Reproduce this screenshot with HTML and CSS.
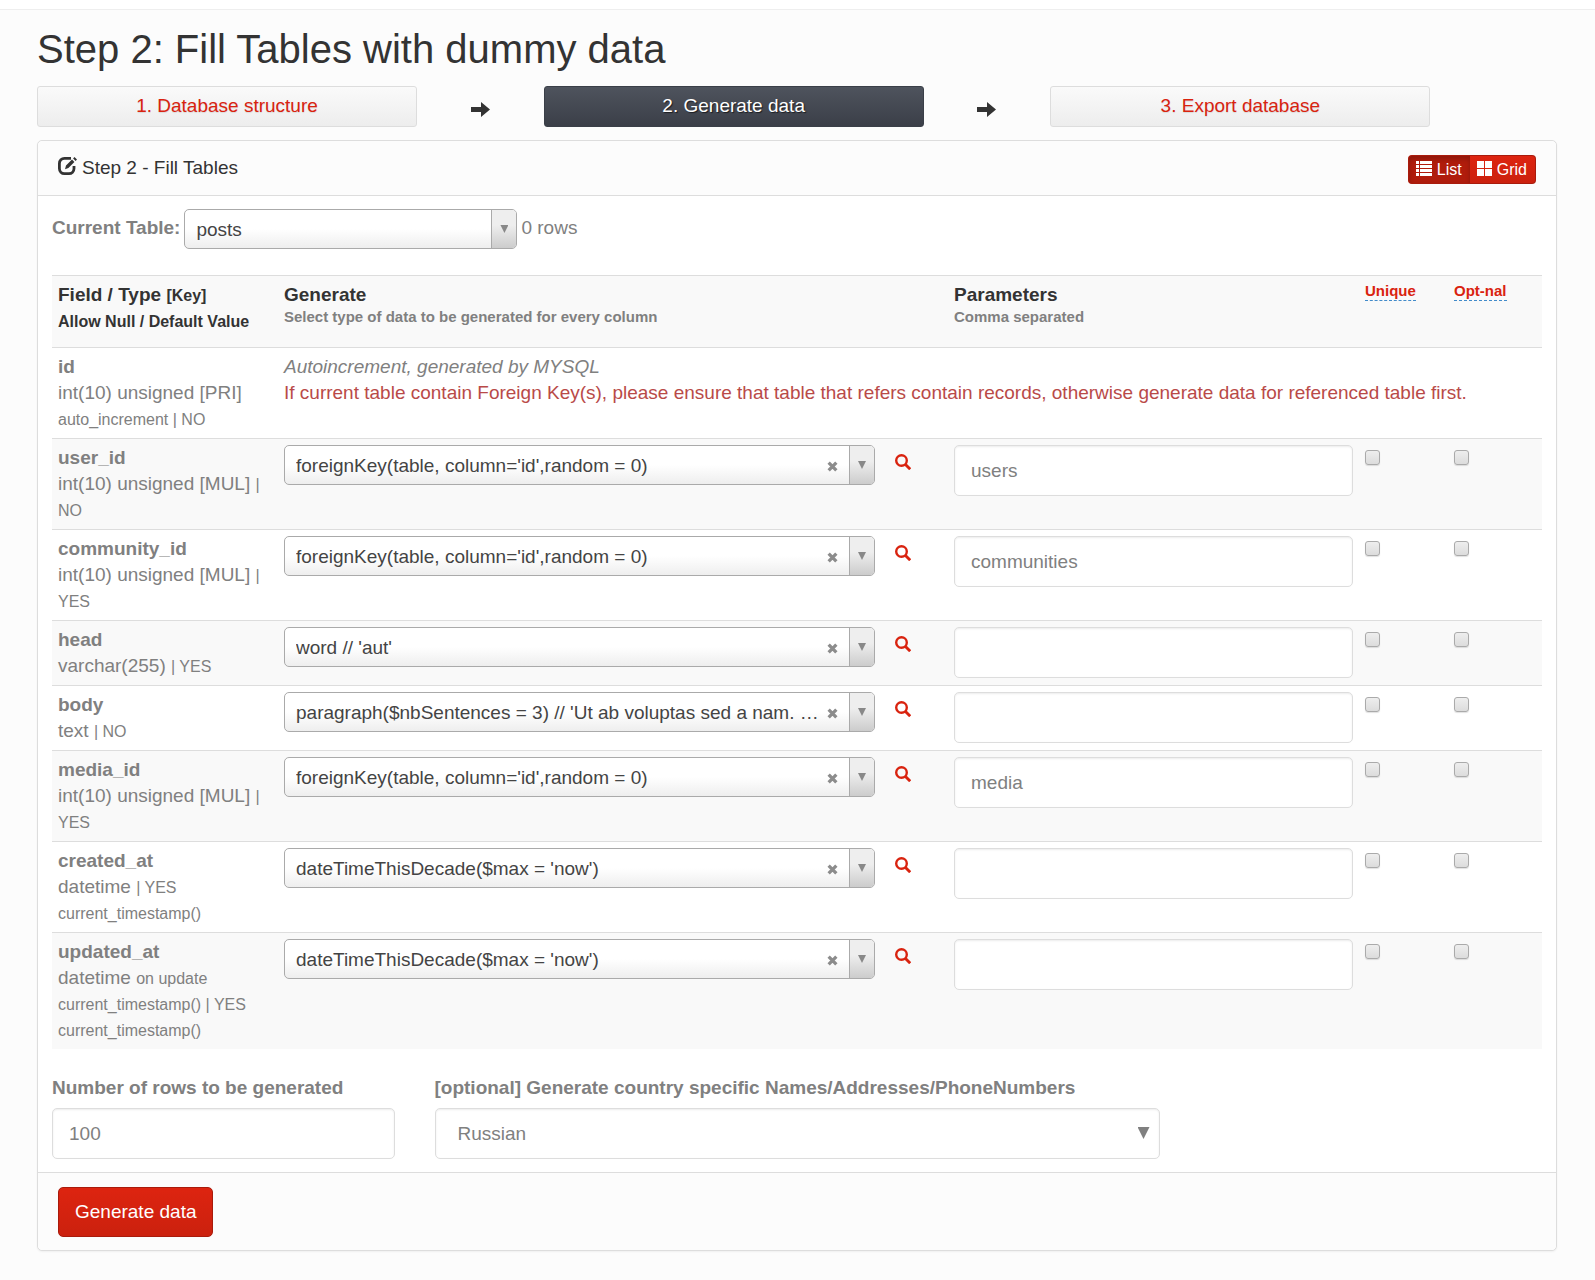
FILE: index.html
```html
<!DOCTYPE html>
<html lang="en">
<head>
<meta charset="utf-8">
<meta name="viewport" content="width=device-width, initial-scale=1">
<title>Step 2: Fill Tables with dummy data</title>
<link rel="stylesheet" href="styles.css">
</head>
<body>
<svg class="sprite" aria-hidden="true">
  <symbol id="i-arrow" viewBox="0 0 19 15"><path d="M0 5h10V0l9 7.500-9 7.500V10H0z"/></symbol>
  <symbol id="i-search" viewBox="0 0 16 16"><circle cx="6.500" cy="6.500" r="5.300" fill="none" stroke="currentColor" stroke-width="2.400"/><path d="M10 10l5.200 5.200" fill="none" stroke="currentColor" stroke-width="2.900"/></symbol>
  <symbol id="i-edit" viewBox="0 0 19 18"><path d="M13 1.400H6.400a5 5 0 0 0-5 5v5.200a5 5 0 0 0 5 5h4.600a5 5 0 0 0 5-5V9" fill="none" stroke="currentColor" stroke-width="2.800"/><path d="M7 12.200l1-3.600 6-6.100 2.400 2.400-6 6.100zM15.100 1.500L16.500 0l2.500 2.500-1.400 1.400z"/></symbol>
  <symbol id="i-list" viewBox="0 0 16 15"><path d="M0 0h3v3H0zM4 0h12v3H4zM0 4h3v3H0zM4 4h12v3H4zM0 8h3v3H0zM4 8h12v3H4zM0 12h3v3H0zM4 12h12v3H4z"/></symbol>
  <symbol id="i-grid" viewBox="0 0 15 15"><path d="M0 0h7v7H0zM8 0h7v7H8zM0 8h7v7H0zM8 8h7v7H8z"/></symbol>
  <symbol id="i-clear" viewBox="0 0 10 10"><path d="M1.500 1.500l7 7M8.500 1.500l-7 7" fill="none" stroke="currentColor" stroke-width="3"/></symbol>
</svg>
<div class="topbar"></div>
<main class="page">
  <h1>Step 2: Fill Tables with dummy data</h1>
  <nav class="steps">
    <a class="step" href="#structure">1. Database structure</a>
    <svg class="icon step-arrow"><use href="#i-arrow"/></svg>
    <a class="step current" href="#generate">2. Generate data</a>
    <svg class="icon step-arrow"><use href="#i-arrow"/></svg>
    <a class="step" href="#export">3. Export database</a>
  </nav>

  <form class="panel">
    <header class="panel-head">
      <svg class="icon edit"><use href="#i-edit"/></svg>
      <span class="panel-title">Step 2 - Fill Tables</span>
      <div class="toggle">
        <button type="button" class="active"><svg class="icon list"><use href="#i-list"/></svg>List</button>
        <button type="button"><svg class="icon grid"><use href="#i-grid"/></svg>Grid</button>
      </div>
    </header>

    <div class="panel-body">
      <div class="current-table">
        <label for="table">Current Table:</label>
        <div class="picker"><select id="table"><option>posts</option></select></div>
        <span>0 rows</span>
      </div>

      <table class="fields">
        <colgroup><col class="c-field"><col><col class="c-params"><col class="c-unique"><col class="c-opt"></colgroup>
        <thead>
          <tr>
            <th>Field / Type <small>[Key]<br>Allow Null / Default Value</small></th>
            <th>Generate<span class="hint">Select type of data to be generated for every column</span></th>
            <th>Parameters<span class="hint">Comma separated</span></th>
            <th><a class="tip" href="#unique">Unique</a></th>
            <th><a class="tip" href="#optional">Opt-nal</a></th>
          </tr>
        </thead>
        <tbody>
          <tr>
            <td><b>id</b><br>int(10) unsigned [PRI]<br><small>auto_increment | NO</small></td>
            <td colspan="4"><em>Autoincrement, generated by MYSQL</em><br><span class="danger">If current table contain Foreign Key(s), please ensure that table that refers contain records, otherwise generate data for referenced table first.</span></td>
          </tr>
          <tr>
            <td><b>user_id</b><br>int(10) unsigned [MUL] <small>|<br>NO</small></td>
            <td><div class="generate"><div class="picker"><select aria-label="Generator for user_id"><option>foreignKey(table, column='id',random = 0)</option></select><button type="button" class="clear" aria-label="Clear"><svg class="icon"><use href="#i-clear"/></svg></button></div><a class="search" href="#find" aria-label="Search"><svg class="icon"><use href="#i-search"/></svg></a></div></td>
            <td><input class="text" type="text" aria-label="Parameters for user_id" value="users"></td>
            <td><input class="check" type="checkbox" aria-label="user_id unique"></td>
            <td><input class="check" type="checkbox" aria-label="user_id optional"></td>
          </tr>
          <tr>
            <td><b>community_id</b><br>int(10) unsigned [MUL] <small>|<br>YES</small></td>
            <td><div class="generate"><div class="picker"><select aria-label="Generator for community_id"><option>foreignKey(table, column='id',random = 0)</option></select><button type="button" class="clear" aria-label="Clear"><svg class="icon"><use href="#i-clear"/></svg></button></div><a class="search" href="#find" aria-label="Search"><svg class="icon"><use href="#i-search"/></svg></a></div></td>
            <td><input class="text" type="text" aria-label="Parameters for community_id" value="communities"></td>
            <td><input class="check" type="checkbox" aria-label="community_id unique"></td>
            <td><input class="check" type="checkbox" aria-label="community_id optional"></td>
          </tr>
          <tr>
            <td><b>head</b><br>varchar(255) <small>| YES</small></td>
            <td><div class="generate"><div class="picker"><select aria-label="Generator for head"><option>word // 'aut'</option></select><button type="button" class="clear" aria-label="Clear"><svg class="icon"><use href="#i-clear"/></svg></button></div><a class="search" href="#find" aria-label="Search"><svg class="icon"><use href="#i-search"/></svg></a></div></td>
            <td><input class="text" type="text" aria-label="Parameters for head"></td>
            <td><input class="check" type="checkbox" aria-label="head unique"></td>
            <td><input class="check" type="checkbox" aria-label="head optional"></td>
          </tr>
          <tr>
            <td><b>body</b><br>text <small>| NO</small></td>
            <td><div class="generate"><div class="picker"><select aria-label="Generator for body"><option>paragraph($nbSentences = 3) // 'Ut ab voluptas sed a nam. …</option></select><button type="button" class="clear" aria-label="Clear"><svg class="icon"><use href="#i-clear"/></svg></button></div><a class="search" href="#find" aria-label="Search"><svg class="icon"><use href="#i-search"/></svg></a></div></td>
            <td><input class="text" type="text" aria-label="Parameters for body"></td>
            <td><input class="check" type="checkbox" aria-label="body unique"></td>
            <td><input class="check" type="checkbox" aria-label="body optional"></td>
          </tr>
          <tr>
            <td><b>media_id</b><br>int(10) unsigned [MUL] <small>|<br>YES</small></td>
            <td><div class="generate"><div class="picker"><select aria-label="Generator for media_id"><option>foreignKey(table, column='id',random = 0)</option></select><button type="button" class="clear" aria-label="Clear"><svg class="icon"><use href="#i-clear"/></svg></button></div><a class="search" href="#find" aria-label="Search"><svg class="icon"><use href="#i-search"/></svg></a></div></td>
            <td><input class="text" type="text" aria-label="Parameters for media_id" value="media"></td>
            <td><input class="check" type="checkbox" aria-label="media_id unique"></td>
            <td><input class="check" type="checkbox" aria-label="media_id optional"></td>
          </tr>
          <tr>
            <td><b>created_at</b><br>datetime <small>| YES<br>current_timestamp()</small></td>
            <td><div class="generate"><div class="picker"><select aria-label="Generator for created_at"><option>dateTimeThisDecade($max = 'now')</option></select><button type="button" class="clear" aria-label="Clear"><svg class="icon"><use href="#i-clear"/></svg></button></div><a class="search" href="#find" aria-label="Search"><svg class="icon"><use href="#i-search"/></svg></a></div></td>
            <td><input class="text" type="text" aria-label="Parameters for created_at"></td>
            <td><input class="check" type="checkbox" aria-label="created_at unique"></td>
            <td><input class="check" type="checkbox" aria-label="created_at optional"></td>
          </tr>
          <tr>
            <td><b>updated_at</b><br>datetime <small>on update<br>current_timestamp() | YES<br>current_timestamp()</small></td>
            <td><div class="generate"><div class="picker"><select aria-label="Generator for updated_at"><option>dateTimeThisDecade($max = 'now')</option></select><button type="button" class="clear" aria-label="Clear"><svg class="icon"><use href="#i-clear"/></svg></button></div><a class="search" href="#find" aria-label="Search"><svg class="icon"><use href="#i-search"/></svg></a></div></td>
            <td><input class="text" type="text" aria-label="Parameters for updated_at"></td>
            <td><input class="check" type="checkbox" aria-label="updated_at unique"></td>
            <td><input class="check" type="checkbox" aria-label="updated_at optional"></td>
          </tr>
        </tbody>
      </table>

      <div class="options">
        <div class="option rows">
          <label for="rows">Number of rows to be generated</label>
          <input class="text" id="rows" type="text" value="100">
        </div>
        <div class="option locale">
          <label for="locale">[optional] Generate country specific Names/Addresses/PhoneNumbers</label>
          <div class="native"><select class="text" id="locale"><option>Russian</option></select></div>
        </div>
      </div>
    </div>

    <footer class="panel-foot">
      <button type="submit" class="submit">Generate data</button>
    </footer>
  </form>
</main>
</body>
</html>
```
FILE: styles.css
```css
* { box-sizing: border-box; }

body {
  margin: 0;
  background: #fcfcfc;
  color: #808080;
  font: 19px/26px "Liberation Sans", Arial, sans-serif;
}

a { color: #d9230f; text-decoration: none; }
button, input, select { font: inherit; margin: 0; }
small { font-size: 16px; line-height: 16px; }

.sprite { display: none; }
.icon { display: block; flex: none; fill: currentColor; }

.topbar { height: 10px; background: #fff; border-bottom: 1px solid #eee; }
.page { padding: 17px 38px 28px 37px; }

h1 {
  margin: 0 0 15px;
  color: #333;
  font-size: 40px;
  font-weight: 400;
  line-height: 44px;
}

/* Wizard steps */
.steps {
  display: grid;
  grid-template-columns: 3fr 1fr 3fr 1fr 3fr 1fr;
  align-items: center;
  margin-bottom: 13px;
}
.step {
  padding: 6px 12px 7px;
  border: 1px solid #ddd;
  border-radius: 3px;
  background: linear-gradient(#fafafa, #ededed);
  text-align: center;
  text-shadow: 0 1px 1px rgba(0, 0, 0, 0.1);
}
.step.current {
  border-color: #3a3f48;
  background: linear-gradient(#4e535d, #3b3f48);
  color: #fff;
  text-shadow: 1px 1px 1px rgba(0, 0, 0, 0.6);
}
.step-arrow { width: 19px; height: 15px; margin-top: 5px; justify-self: center; color: #333; }

/* Panel */
.panel {
  border: 1px solid #ddd;
  border-radius: 5px;
  background: #fff;
  box-shadow: 0 1px 2px rgba(0, 0, 0, 0.05);
}
.panel-head {
  display: flex;
  align-items: flex-start;
  padding: 14px 20px 11px;
  border-bottom: 1px solid #ddd;
  border-radius: 5px 5px 0 0;
  background: #fcfcfc;
  color: #333;
}
.edit { width: 19px; height: 18px; margin: 2px 5px 0 0; }
.panel-title { flex: 1; }
.panel-body { padding: 13px 14px; }
.panel-foot {
  padding: 14px 20px 13px;
  border-top: 1px solid #ddd;
  border-radius: 0 0 5px 5px;
  background: #fcfcfc;
}

.toggle { display: flex; }
.toggle button {
  display: flex;
  align-items: center;
  gap: 5px;
  height: 29px;
  padding: 0 8px 0 7px;
  border: 1px solid #a91b0c;
  background: linear-gradient(#dd2410, #cb210e);
  color: #fff;
  font-size: 16px;
  line-height: 24px;
}
.toggle button:first-child { border-right: 0; border-radius: 4px 0 0 4px; }
.toggle button:last-child { border-left: 0; border-radius: 0 4px 4px 0; }
.toggle .active { background: #b01c0c; box-shadow: inset 0 3px 5px rgba(0, 0, 0, 0.2); }
.toggle .icon { height: 15px; margin-bottom: 3px; }
.list { width: 16px; }
.grid { width: 15px; }

.submit {
  display: block;
  height: 50px;
  padding: 0 16px;
  border: 1px solid #a91b0c;
  border-radius: 5px;
  background: linear-gradient(#dd2410, #cb210e);
  color: #fff;
}

/* Searchable drop-down */
.picker { position: relative; }
.picker select {
  display: block;
  width: 100%;
  height: 40px;
  padding: 1px 48px 0 11px;
  border: 1px solid #aaa;
  border-radius: 5px;
  appearance: none;
  background: linear-gradient(#fff 50%, #eee);
  color: #444;
}
.picker::before {
  content: "";
  position: absolute;
  top: 1px;
  right: 1px;
  bottom: 1px;
  width: 24px;
  border-left: 1px solid #aaa;
  border-radius: 0 4px 4px 0;
  background: linear-gradient(#eee 40%, #ccc);
  pointer-events: none;
}
.picker::after {
  content: "";
  position: absolute;
  top: 16px;
  right: 9px;
  width: 8px;
  height: 8px;
  background: #888;
  clip-path: polygon(0 0, 100% 0, 50% 100%);
  pointer-events: none;
}
.clear {
  position: absolute;
  top: 16px;
  right: 37px;
  padding: 0;
  border: 0;
  background: none;
  color: #8c8c8c;
}
.clear .icon { width: 11px; height: 11px; }

.current-table {
  display: flex;
  gap: 4px;
  margin-bottom: 26px;
  line-height: 38px;
}
.current-table label { font-weight: 700; }
.current-table .picker { width: 333px; }

/* Field list */
.fields { width: 100%; table-layout: fixed; border-spacing: 0; }
.c-field { width: 226px; }
.c-params { width: 411px; }
.c-unique { width: 89px; }
.c-opt { width: 94px; }
.fields th, .fields td {
  padding: 6px;
  border-top: 1px solid #ddd;
  text-align: left;
  vertical-align: top;
}
.fields th { padding-bottom: 13px; background: #f9f9f9; color: #333; }
.fields tbody tr:nth-child(even) { background: #f9f9f9; }
.hint { display: block; color: #808080; font-size: 15px; line-height: 18px; }
.tip {
  display: inline-block;
  vertical-align: top;
  border-bottom: 1px dashed #428bca;
  font-size: 15px;
  line-height: 18px;
}
.danger { color: #b94a48; }

.generate { display: flex; gap: 20px; padding-right: 31px; }
.generate .picker { flex: 1; min-width: 0; }
.search { padding-top: 9px; }
.search .icon { width: 16px; height: 16px; }

.text {
  display: block;
  width: 100%;
  height: 51px;
  padding: 0 16px;
  border: 1px solid #ddd;
  border-radius: 5px;
  background: #fff;
  box-shadow: inset 0 1px 2px rgba(0, 0, 0, 0.08);
  color: #808080;
}
.check {
  display: block;
  width: 15px;
  height: 15px;
  margin-top: 5px;
  border: 1px solid #aaa;
  border-radius: 3px;
  appearance: none;
  background: linear-gradient(#eee, #dcdcdc);
  box-shadow: 0 1px 1px rgba(0, 0, 0, 0.12);
}

/* Generation options */
.options {
  display: grid;
  grid-template-columns: repeat(12, minmax(0, 1fr));
  column-gap: 40px;
  margin-top: 26px;
}
.rows { grid-column: span 3; }
.locale { grid-column: span 6; }
.option label { display: block; margin-bottom: 7px; font-weight: 700; white-space: nowrap; }
.native { position: relative; }
.native select { padding: 0 22px; appearance: none; }
.native::after {
  content: "";
  position: absolute;
  top: 19px;
  right: 10px;
  width: 12px;
  height: 12px;
  background: #808080;
  clip-path: polygon(0 0, 100% 0, 50% 100%);
  pointer-events: none;
}
```
